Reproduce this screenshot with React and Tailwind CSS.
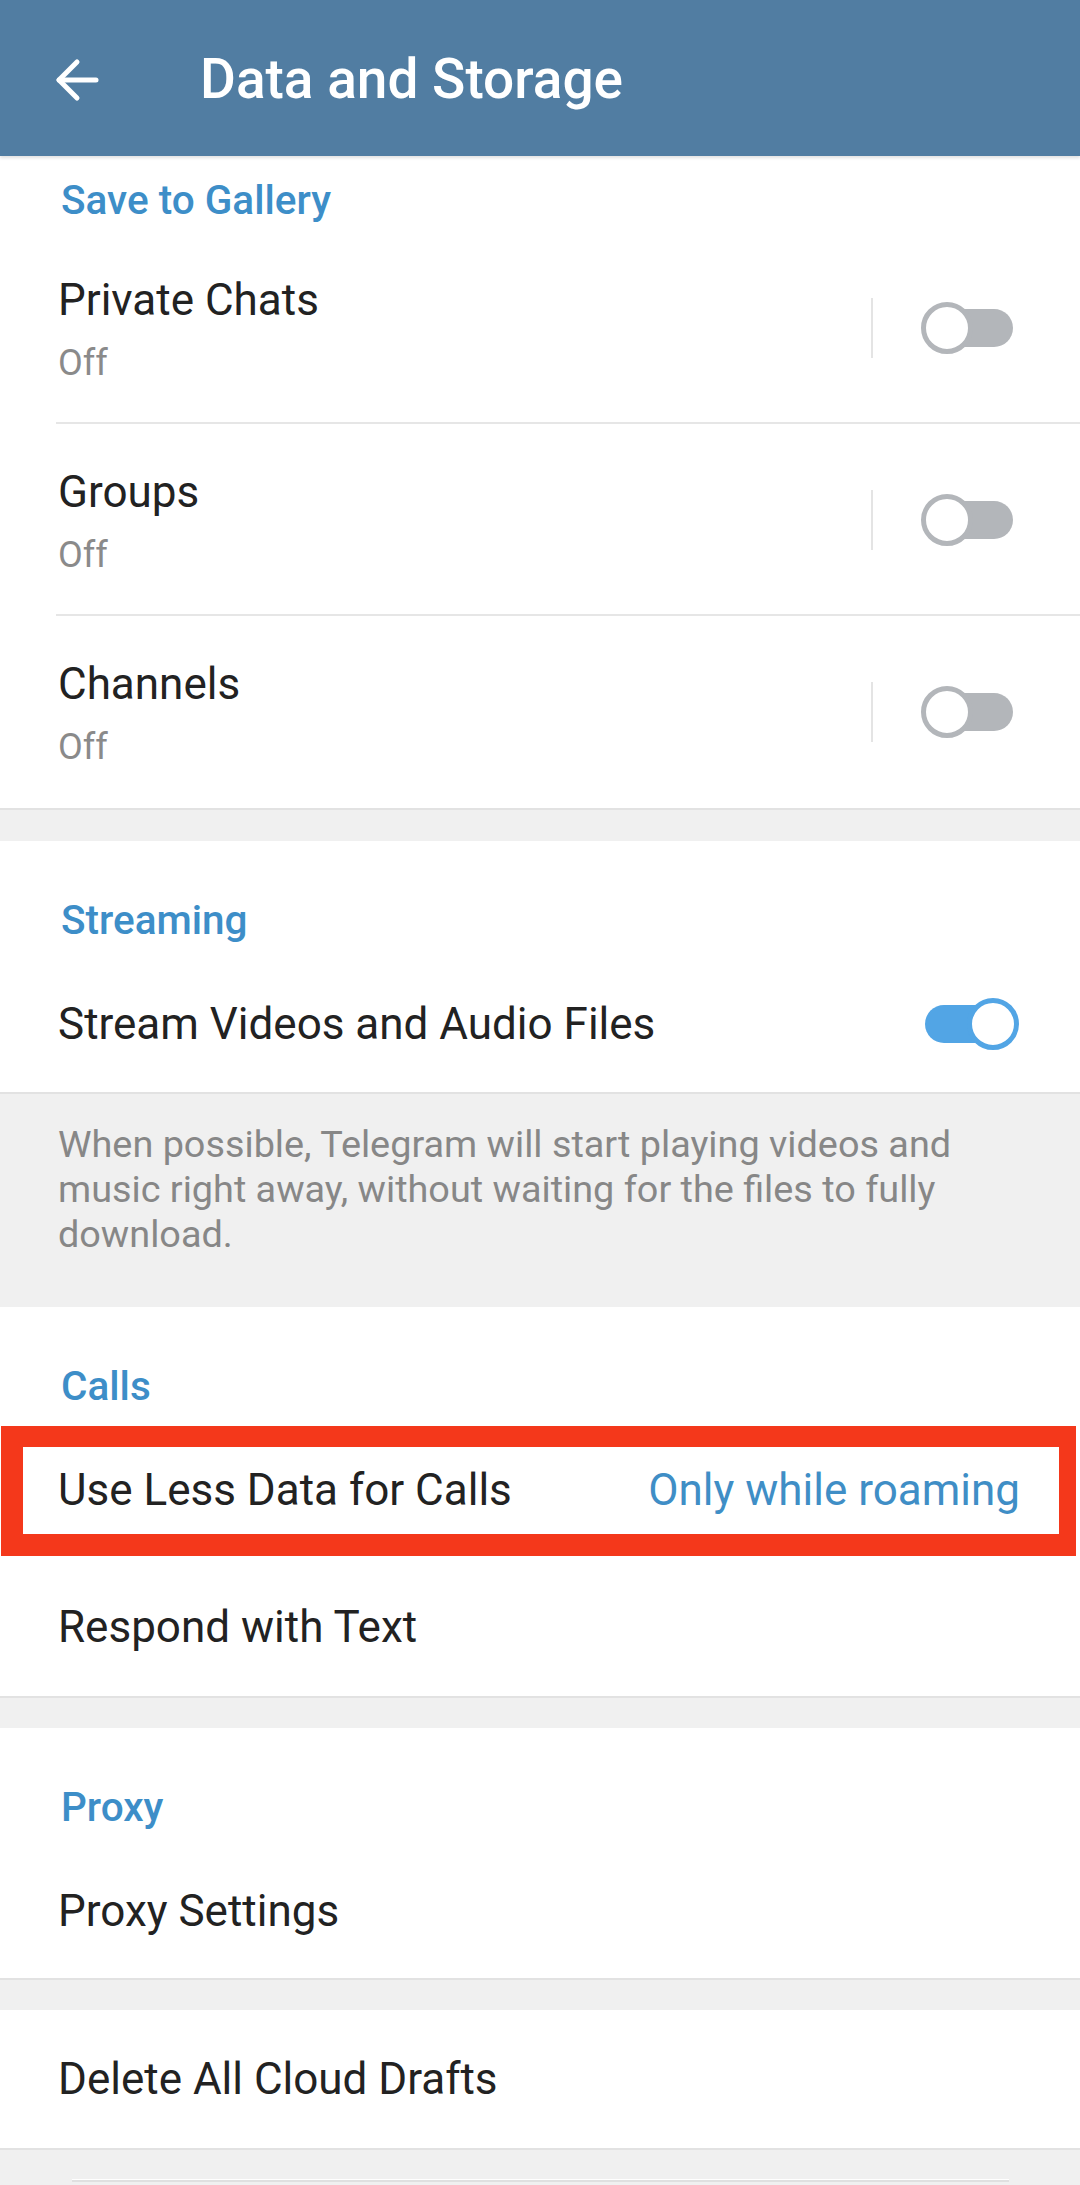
import React from "react";

function Toggle({ on }) {
  return (
    <div className="relative w-[98px] h-[54px] shrink-0">
      <div
        className={
          "absolute left-[4px] top-[8px] w-[88px] h-[38px] rounded-full " +
          (on ? "bg-[#52a5e5]" : "bg-[#b3b6ba]")
        }
      />
      <div
        className={
          "absolute top-[1px] w-[52px] h-[52px] rounded-full bg-white border-[5px] " +
          (on ? "left-[46px] border-[#52a5e5]" : "left-0 border-[#b3b6ba]")
        }
      />
    </div>
  );
}

function ToggleRow({ title, sub, divider }) {
  return (
    <div className="relative h-[192px] flex">
      <div className="flex-1 pl-[58px] pt-[46px]">
        <div className="text-[44px] leading-[44px] text-[#222222]">{title}</div>
        <div className="mt-[23px] text-[36px] leading-[36px] text-[#8a8a8a]">{sub}</div>
      </div>
      <div className="flex items-center pr-[61px]">
        <div className="w-[2px] h-[60px] bg-[#e4e4e4] mr-[48px]" />
        <Toggle on={false} />
      </div>
      {divider && (
        <div className="absolute left-[56px] right-0 bottom-0 h-[2px] bg-[#e6e6e6]" />
      )}
    </div>
  );
}

function SectionHeader({ children }) {
  return (
    <div className="h-[115px] pl-[61px] pt-[59px] text-[40.5px] leading-[40px] font-medium text-[#3d8ec8]">
      {children}
    </div>
  );
}

function Row({ children, h = "h-[136px]", right }) {
  return (
    <div className={"flex items-center justify-between pl-[58px] pr-[60px] " + h}>
      <div className="text-[44px] leading-[44px] text-[#222222] whitespace-nowrap">{children}</div>
      {right}
    </div>
  );
}

function Gap() {
  return <div className="h-[32px] bg-[#f0f0f0] border-t-[2px] border-[#e2e2e2]" />;
}

export default function App() {
  return (
    <div className="w-[1080px] h-[2185px] overflow-hidden bg-[#f0f0f0] font-['Roboto','Liberation_Sans',sans-serif]">
      {/* Action bar */}
      <div className="relative z-10 h-[156px] bg-[#517da2] flex items-center pt-[3px] shadow-[0_2px_3px_rgba(0,0,0,0.12)]">
        <div className="w-[200px] pl-[55px] flex items-center">
          <svg width="44" height="44" viewBox="0 0 44 44" fill="none" stroke="white" strokeWidth="5" strokeLinecap="round" strokeLinejoin="round">
            <path d="M41 22 H4" />
            <path d="M22 4 L4 22 L22 40" />
          </svg>
        </div>
        <div className="text-[55px] leading-[55px] font-medium text-white">Data and Storage</div>
      </div>

      {/* Save to Gallery */}
      <div className="bg-white">
        <div className="h-[76px] pl-[61px] pt-[24px] text-[40.5px] leading-[40px] font-medium text-[#3d8ec8]">
          Save to Gallery
        </div>
        <ToggleRow title="Private Chats" sub="Off" divider />
        <ToggleRow title="Groups" sub="Off" divider />
        <ToggleRow title="Channels" sub="Off" />
      </div>
      <div className="h-[33px] bg-[#f0f0f0] border-t-[2px] border-[#e2e2e2]" />

      {/* Streaming */}
      <div className="bg-white">
        <SectionHeader>Streaming</SectionHeader>
        <div className="flex items-center justify-between h-[136px] pl-[58px] pr-[61px]">
          <div className="text-[44px] leading-[44px] text-[#222222] whitespace-nowrap">
            Stream Videos and Audio Files
          </div>
          <Toggle on />
        </div>
      </div>
      <div className="h-[215px] bg-[#f0f0f0] border-t-[2px] border-[#e2e2e2] pl-[58px] pt-[28px] text-[37.8px] leading-[45px] text-[#878787]">
        <div className="whitespace-nowrap">When possible, Telegram will start playing videos and</div>
        <div className="whitespace-nowrap">music right away, without waiting for the files to fully</div>
        <div className="whitespace-nowrap">download.</div>
      </div>

      {/* Calls */}
      <div className="bg-white">
        <SectionHeader>Calls</SectionHeader>
        <div className="relative">
          <Row
            right={
              <div className="text-[44px] leading-[44px] text-[#3f8ec6] whitespace-nowrap">
                Only while roaming
              </div>
            }
          >
            Use Less Data for Calls
          </Row>
          <div className="absolute left-[1px] right-[4px] top-[4px] bottom-[2px] border-l-[22px] border-t-[21px] border-b-[22px] border-r-[17px] border-[#f4381b]" />
        </div>
        <Row h="h-[138px]">Respond with Text</Row>
      </div>
      <Gap />

      {/* Proxy */}
      <div className="bg-white">
        <SectionHeader>Proxy</SectionHeader>
        <Row h="h-[135px]">Proxy Settings</Row>
      </div>
      <Gap />

      <div className="bg-white">
        <Row h="h-[138px]">Delete All Cloud Drafts</Row>
      </div>
      <div className="h-[37px] bg-[#f0f0f0] border-t-[2px] border-[#e2e2e2] pt-[29px]">
        <div className="ml-[72px] w-[937px] h-[3px] bg-[#e0e0e0] border-t border-white" />
      </div>
    </div>
  );
}
